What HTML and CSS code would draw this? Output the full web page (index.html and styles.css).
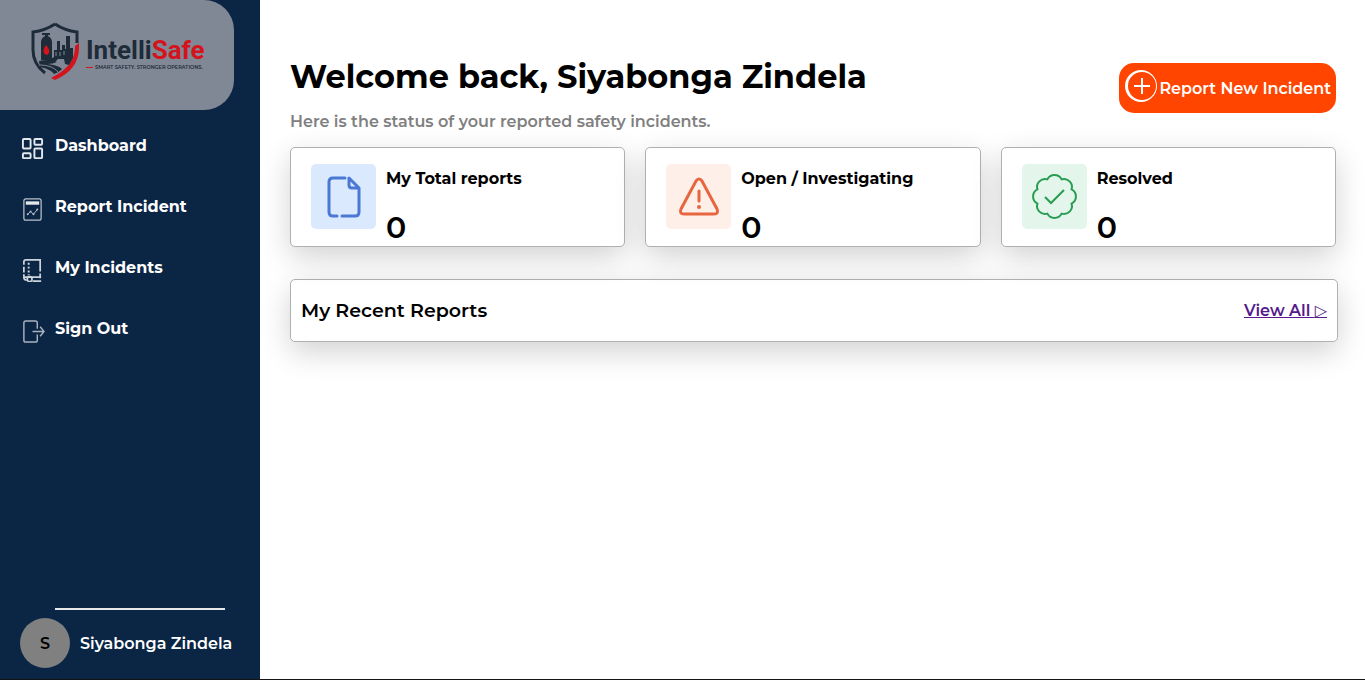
FILE: index.html
```html
<!DOCTYPE html>
<html lang="en">
<head>
    <meta charset="UTF-8">
    <meta name="viewport" content="width=device-width, initial-scale=1.0">
    <title>IntelliSafe - Dashboard</title>
    <link rel="stylesheet" href="styles.css">
</head>
<body>
    <div class="app">
        <aside class="sidebar">
            <div class="logo">
                <svg class="logo-shield" viewBox="0 0 48 58" aria-hidden="true">
                    <path d="M24 2C18 6 10 9 2 10v18c0 10 4 17 12 23" fill="none" stroke="#1d2c38" stroke-width="3"/>
                    <path d="M24 2c6 4 14 7 22 8v11" fill="none" stroke="#1d2c38" stroke-width="3"/>
                    <path d="M48 21c1 18-6 29-24 37l-4-2c15-8 24-16 24-32z" fill="#d4141c"/>
                    <path d="M10 38V20c0-3 2-5 4-6v-1h-3v-2h8v2h-2v1c2 1 4 3 4 6v18z" fill="#1d2c38"/>
                    <path d="M23 35v-7h3v-9h3v9h2v-5h3v4h1V14h4v12h3v10l-4 7-4-1-1-5h-6l-2 2h-9z" fill="#1d2c38"/>
                    <path d="M8 39c7-2 16-1 18 1-3 1-6 2-9 2 8 1 12 3 14 5-2 2-5 4-8 5-3-4-9-6-14-7z" fill="#1d2c38"/>
                    <path d="M16 33c-5-1-4-6-1-10 3 3 5 8 1 10z" fill="#d4141c"/>
                    <path d="M8 43c8 0 15 2 19 7M25 30v4M29 30v4M33 29v4" fill="none" stroke="#808896"/>
                </svg>
                <div class="logo-text">
                    <span class="logo-name">Intelli<span class="red">Safe</span></span>
                    <span class="logo-tagline">Smart safety. Stronger operations.</span>
                </div>
            </div>

            <nav class="menu">
                <a href="#" class="menu-item">
                    <svg viewBox="0 0 24 24" aria-hidden="true"><g fill="none" stroke="#e4e8ec" stroke-width="2"><rect x="2" y="2" width="8" height="10" rx="1"/><rect x="14" y="2" width="8" height="6" rx="1"/><rect x="2" y="17" width="8" height="5" rx="1"/><rect x="14" y="12" width="8" height="10" rx="1"/></g></svg>
                    <span>Dashboard</span>
                </a>
                <a href="#" class="menu-item">
                    <svg viewBox="0 0 24 24" aria-hidden="true"><g fill="none" stroke="#b9c1ca" stroke-width="1.3"><rect x="3" y="1" width="18" height="22" rx="2"/><path d="M7 17l3-3 3 3 4-5" stroke-width="1"/></g><rect x="5" y="3.500" width="14" height="3.500" fill="#e4e8ec"/><g fill="#b9c1ca"><circle cx="7" cy="17" r="1"/><circle cx="10" cy="14" r="1"/><circle cx="13" cy="17" r="1"/><circle cx="17" cy="12" r="1"/></g></svg>
                    <span>Report Incident</span>
                </a>
                <a href="#" class="menu-item">
                    <svg viewBox="0 0 24 24" aria-hidden="true"><g fill="none" stroke="#ccd3da" stroke-width="1.800"><path d="M3 6V3q0-2 2-2h15v12M3 8v6M20 15v5M3 16v3q0 3 3 3M3 19h18M12 23h9"/><circle cx="9" cy="21" r="2.500"/></g><path d="M8 4v13" stroke="#ccd3da" stroke-width="2" stroke-dasharray="2 2"/></svg>
                    <span>My Incidents</span>
                </a>
                <a href="#" class="menu-item">
                    <svg viewBox="0 0 24 24" aria-hidden="true"><g fill="none" stroke="#aab3bd" stroke-width="1.500"><path d="M17 9V3q0-2-2-2H5Q3 1 3 3v18q0 2 2 2h10q2 0 2-2v-6M12 12h12M20 7l4 5-4 5"/></g></svg>
                    <span>Sign Out</span>
                </a>
            </nav>

            <div class="account">
                <hr>
                <div class="user">
                    <div class="avatar">S</div>
                    <span>Siyabonga Zindela</span>
                </div>
            </div>
        </aside>

        <main class="content">
            <header class="header">
                <div>
                    <h1>Welcome back, Siyabonga Zindela</h1>
                    <p>Here is the status of your reported safety incidents.</p>
                </div>
                <button type="button" class="report-btn">
                    <svg viewBox="0 0 34 34" aria-hidden="true"><path fill="#fff" fill-rule="evenodd" d="M17 1a16 16 0 1 0 0 32 16 16 0 0 0 0-32zM18 3a14 14 0 1 1 0 28 14 14 0 0 1 0-28z"/><path d="M18 9v16M10 17h16" stroke="#fff" stroke-width="2"/></svg>
                    <span>Report New Incident</span>
                </button>
            </header>

            <section class="cards">
                <div class="card">
                    <div class="card-icon blue">
                        <svg viewBox="0 0 45 45" aria-hidden="true"><path d="M24 4H12Q8 4 8 8v30q0 4 4 4h4M21 42h13q4 0 4-4V14L28 4v7q0 3 3 3h7" fill="none" stroke="#4a78d2" stroke-width="3" stroke-linecap="round" stroke-linejoin="round"/></svg>
                    </div>
                    <div class="card-info">
                        <h2>My Total reports</h2>
                        <span class="count">0</span>
                    </div>
                </div>
                <div class="card">
                    <div class="card-icon orange">
                        <svg viewBox="0 0 45 45" aria-hidden="true"><path d="M20 7q3-4 6 0l15 28q2 5-3 5H8q-5 0-3-5z" fill="none" stroke="#e8663f" stroke-width="3"/><path d="M23 17v10" stroke="#e8663f" stroke-width="3" stroke-linecap="round"/><circle cx="23" cy="33" r="2" fill="#e8663f"/></svg>
                    </div>
                    <div class="card-info">
                        <h2>Open / Investigating</h2>
                        <span class="count">0</span>
                    </div>
                </div>
                <div class="card">
                    <div class="card-icon green">
                        <svg viewBox="0 0 45 45" aria-hidden="true"><path d="M15.400 5.400A8 8 0 0 1 29.600 5.400A8 8 0 0 1 39.600 15.400A8 8 0 0 1 39.600 29.600A8 8 0 0 1 29.600 39.600A8 8 0 0 1 15.400 39.600A8 8 0 0 1 5.400 29.600A8 8 0 0 1 5.400 15.400A8 8 0 0 1 15.400 5.400z" fill="none" stroke="#289c52" stroke-width="2"/><path d="M13 23l6 6 13-13" fill="none" stroke="#289c52" stroke-width="2"/></svg>
                    </div>
                    <div class="card-info">
                        <h2>Resolved</h2>
                        <span class="count">0</span>
                    </div>
                </div>
            </section>

            <section class="recent">
                <h2>My Recent Reports</h2>
                <a href="#">View All <span class="arrow">▷</span></a>
            </section>
        </main>
    </div>
</body>
</html>
```
FILE: styles.css
```css
/* General */
* {
    box-sizing: border-box;
}

body {
    font-family: Montserrat, "DejaVu Sans", sans-serif;
    font-size: 16px;
    color: #000;
    background: #fff;
    margin: 0;
}

h1, h2, p {
    margin: 0;
}

.app {
    display: flex;
    min-height: 100vh;
    border-bottom: 1px solid #141414;
}

/* Sidebar */
.sidebar {
    display: flex;
    flex-direction: column;
    flex: 0 0 260px;
    background: #0b2545;
    color: #fff;
}

.logo {
    display: flex;
    align-items: center;
    gap: 7px;
    width: 90%;
    height: 110px;
    padding: 0 0 8px 31px;
    background: #808896;
    border-radius: 0 30px 30px 0;
}

.logo-shield {
    width: 48px;
    height: 58px;
}

.logo-text {
    display: flex;
    flex-direction: column;
    padding-top: 4px;
    color: #1d2c38;
    font-family: Roboto, sans-serif;
    white-space: nowrap;
}

.logo-name {
    font-size: 26px;
    font-weight: 700;
    line-height: 28px;
}

.red {
    color: #d4141c;
}

.logo-tagline {
    display: flex;
    align-items: center;
    gap: 2px;
    font-family: Montserrat, sans-serif;
    font-size: 5px;
    font-weight: 600;
    line-height: 6px;
    text-transform: uppercase;
}

.logo-tagline::before {
    content: "";
    width: 7px;
    height: 1px;
    background: #d4141c;
}

.menu {
    display: flex;
    flex-direction: column;
    gap: 37px;
    padding: 24px 20px;
}

.menu-item {
    display: flex;
    gap: 10px;
    height: 24px;
    color: #fff;
    font-weight: 700;
    line-height: 24px;
    text-decoration: none;
}

.menu-item svg {
    width: 25px;
    height: 23px;
    margin-top: 3px;
}

.account {
    margin-top: auto;
    padding: 0 20px 11px;
}

.account hr {
    width: 170px;
    height: 2px;
    margin: 0 0 8px 35px;
    border: none;
    background: #e8e8e8;
}

.user {
    display: flex;
    align-items: center;
    gap: 10px;
    font-weight: 600;
}

.avatar {
    display: flex;
    align-items: center;
    justify-content: center;
    width: 50px;
    height: 50px;
    border-radius: 50%;
    background: #808080;
    color: #000;
}

/* Main content */
.content {
    flex: 1;
    min-width: 0;
    padding: 57px 29px 30px 30px;
}

.header {
    display: flex;
    justify-content: space-between;
    align-items: flex-start;
}

.header h1 {
    font-size: 32px;
    line-height: 40px;
}

.header p {
    margin: 13px 0;
    color: #808080;
    font-weight: 600;
    line-height: 24px;
}

.report-btn {
    display: flex;
    align-items: center;
    gap: 1px;
    height: 50px;
    margin-top: 6px;
    padding: 0 5px;
    border: none;
    border-radius: 15px;
    background: #ff4500;
    color: #fff;
    font: inherit;
    font-weight: 600;
    white-space: nowrap;
    cursor: pointer;
}

.report-btn svg {
    width: 34px;
    height: 34px;
    margin-bottom: 4px;
}

/* Cards */
.cards {
    display: grid;
    grid-template-columns: repeat(3, 1fr);
    gap: 20px;
}

.card,
.recent {
    display: flex;
    background: #fff;
    border: 1px solid #b0b0b0;
    border-radius: 5px;
    box-shadow: 0 10px 30px rgba(0, 0, 0, 0.18);
}

.card {
    gap: 10px;
    height: 100px;
    padding: 16px 20px 0;
}

.card-icon {
    display: flex;
    align-items: center;
    justify-content: center;
    width: 65px;
    height: 65px;
    border-radius: 5px;
}

.card-icon svg {
    width: 45px;
    height: 45px;
}

.blue {
    background: #dbe9ff;
}

.orange {
    background: #ffefe9;
}

.green {
    background: #e4f6ec;
}

.card h2 {
    font-size: 16px;
    font-weight: 700;
    line-height: 30px;
}

.count {
    display: block;
    margin-top: 14px;
    font-size: 30px;
    font-weight: 600;
    line-height: 40px;
}

/* Recent reports */
.recent {
    box-sizing: content-box;
    width: 100%;
    margin-top: 32px;
    align-items: center;
    justify-content: space-between;
}

.recent h2 {
    padding: 0 10px;
    font-size: 19px;
    font-weight: 600;
    line-height: 61px;
}

.recent a {
    padding: 0 10px;
    color: #551a8b;
    font-weight: 600;
}

.arrow {
    font-family: "DejaVu Sans", sans-serif;
    font-weight: 400;
}
```
